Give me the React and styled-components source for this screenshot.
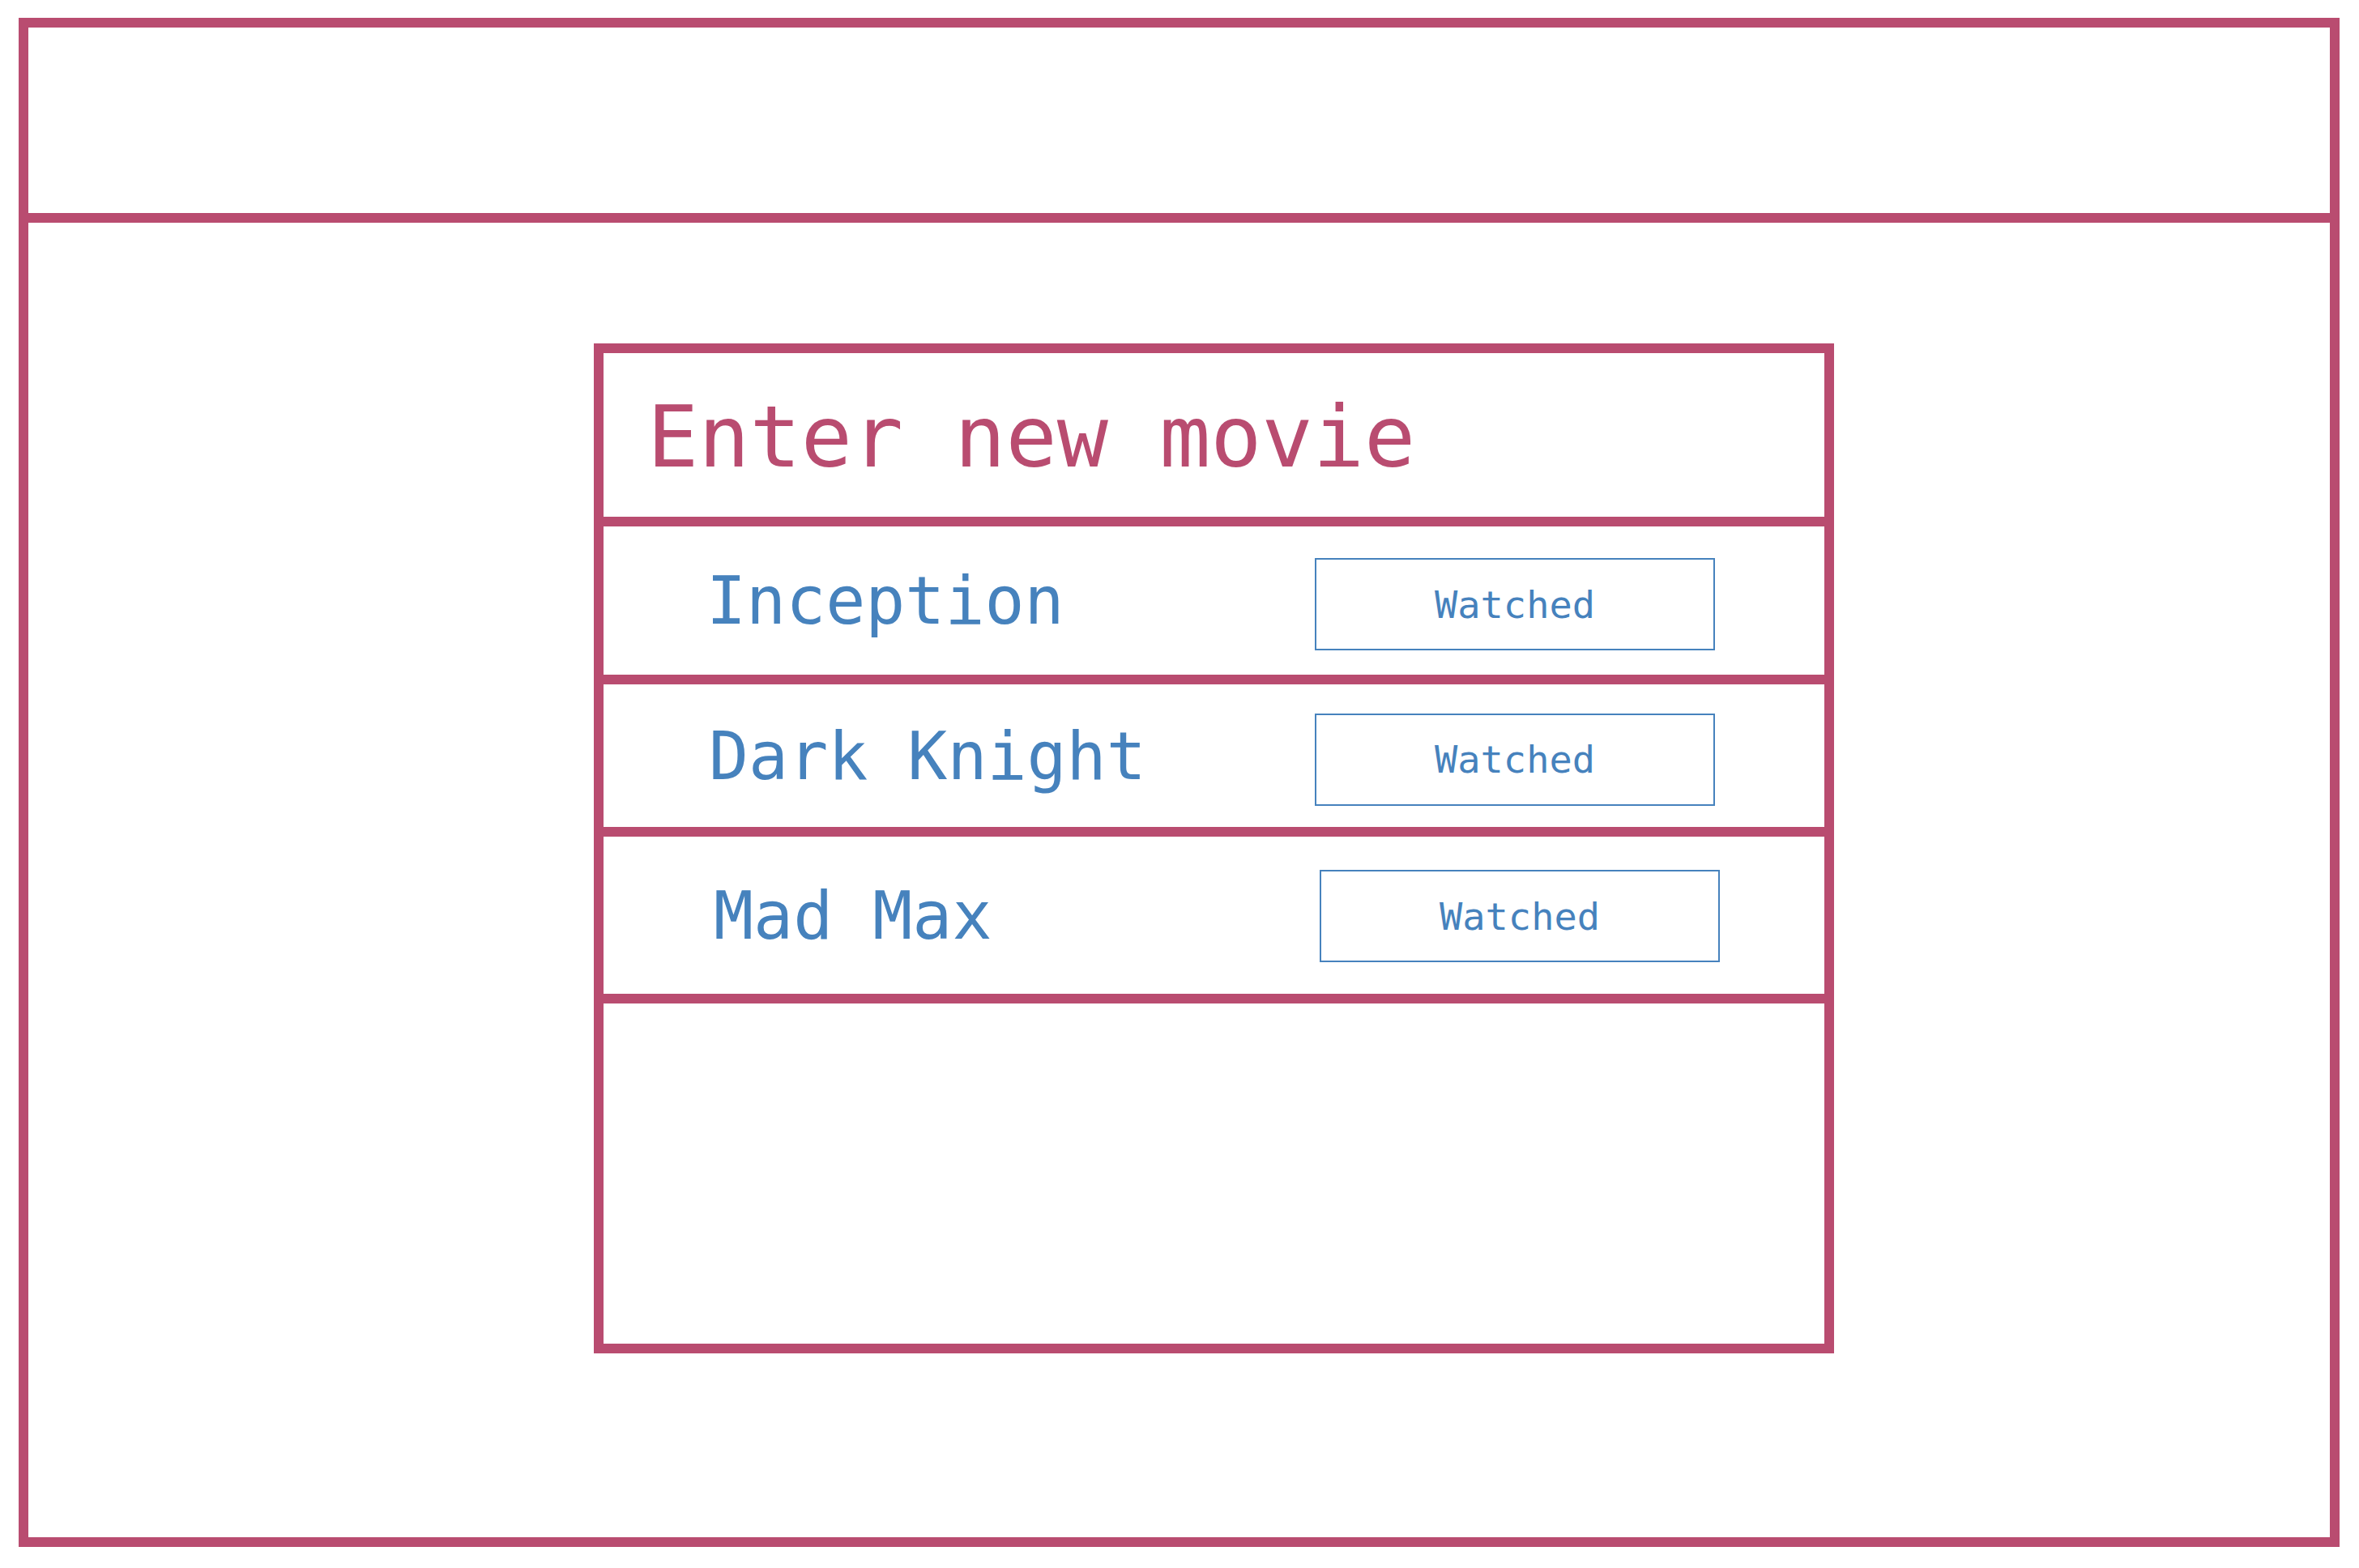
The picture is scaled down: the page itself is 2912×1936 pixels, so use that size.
import React from "react";
import styled, { createGlobalStyle } from "styled-components";

const PINK = "#b94c70";
const BLUE = "#4682bd";
const MONO = `"DejaVu Sans Mono", "Liberation Mono", monospace`;

const movies = [
  { id: 1, title: "Inception", height: 183, shift: 0, indent: 6, btnOffset: 9 },
  { id: 2, title: "Dark Knight", height: 176, shift: 0, indent: 9, btnOffset: 9 },
  { id: 3, title: "Mad Max", height: 194, shift: 6, indent: 9, btnOffset: 2 },
];

const MovieRow = ({ movie }) => {
  return (
    <StRow $height={movie.height} $shift={movie.shift}>
      <StMovieName $indent={movie.indent}>{movie.title}</StMovieName>
      <StWatchButton type="button" $offset={movie.btnOffset}>
        Watched
      </StWatchButton>
    </StRow>
  );
};

const App = () => {
  return (
    <>
      <GlobalStyle />
      <StFrame>
        <StHeader />
        <StBody>
          <StCard>
            <StCardTitle>Enter new movie</StCardTitle>
            {movies.map((movie) => (
              <MovieRow key={movie.id} movie={movie} />
            ))}
          </StCard>
        </StBody>
      </StFrame>
    </>
  );
};

export default App;

// styled-components
const GlobalStyle = createGlobalStyle`
  body {
    margin: 0;
    background: #ffffff;
    font-family: ${MONO};
  }
`;
const StFrame = styled.div`
  margin: 22px 0 0 23px;
  width: 2865px;
  height: 1888px;
  box-sizing: border-box;
  border: 12px solid ${PINK};
  display: flex;
  flex-direction: column;
`;
const StHeader = styled.header`
  height: 241px;
  box-sizing: border-box;
  border-bottom: 12px solid ${PINK};
`;
const StBody = styled.main`
  flex: 1;
  padding: 149px 0 0 698px;
`;
const StCard = styled.section`
  width: 1531px;
  height: 1247px;
  box-sizing: border-box;
  border: 12px solid ${PINK};
  display: flex;
  flex-direction: column;
`;
const StCardTitle = styled.h1`
  margin: 0;
  height: 214px;
  box-sizing: border-box;
  padding: 43px 0 0 54px;
  border-bottom: 12px solid ${PINK};
  font-family: ${MONO};
  font-size: 105px;
  font-weight: 400;
  line-height: normal;
  color: ${PINK};
`;
const StRow = styled.div`
  height: ${({ $height }) => $height + 12}px;
  box-sizing: border-box;
  border-bottom: 12px solid ${PINK};
  padding-left: ${({ $shift }) => 121 + $shift}px;
  display: grid;
  grid-template-columns: 757px 494px;
  align-items: center;
`;
const StMovieName = styled.span`
  padding-left: ${({ $indent }) => $indent}px;
  font-family: ${MONO};
  font-size: 81.5px;
  line-height: normal;
  color: ${BLUE};
`;
const StWatchButton = styled.button`
  width: 494px;
  height: 114px;
  margin-top: ${({ $offset }) => $offset}px;
  padding: 0;
  box-sizing: border-box;
  border: 2px solid ${BLUE};
  border-radius: 0;
  background: #ffffff;
  font-family: ${MONO};
  font-size: 47px;
  color: ${BLUE};
  display: flex;
  align-items: center;
  justify-content: center;
`;
